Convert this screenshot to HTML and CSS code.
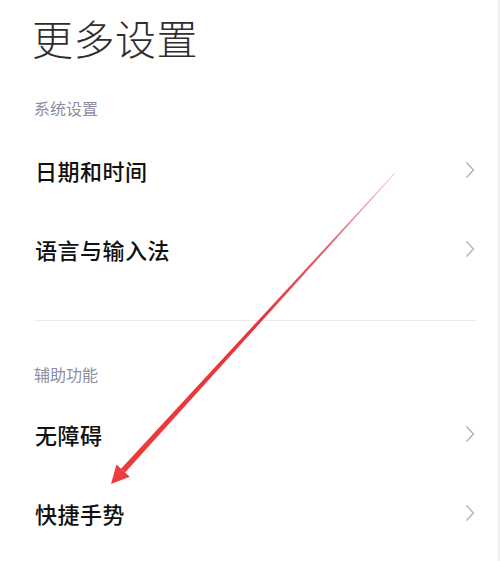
FILE: index.html
```html
<!DOCTYPE html>
<html lang="zh-CN">
<head>
<meta charset="utf-8">
<title>更多设置</title>
<link rel="stylesheet" href="styles.css">
</head>
<body>
<div class="page">
  <h1 class="title">更多设置</h1>
  <div class="section-label first">系统设置</div>
  <div class="row"><span class="row-text">日期和时间</span><svg class="chev" viewBox="0 0 10 18" width="10" height="18"><path d="M1.5 1.5 L8.5 9 L1.5 16.5"/></svg></div>
  <div class="row"><span class="row-text">语言与输入法</span><svg class="chev" viewBox="0 0 10 18" width="10" height="18"><path d="M1.5 1.5 L8.5 9 L1.5 16.5"/></svg></div>
  <div class="divider"></div>
  <div class="section-label second">辅助功能</div>
  <div class="row"><span class="row-text">无障碍</span><svg class="chev" viewBox="0 0 10 18" width="10" height="18"><path d="M1.5 1.5 L8.5 9 L1.5 16.5"/></svg></div>
  <div class="row"><span class="row-text">快捷手势</span><svg class="chev" viewBox="0 0 10 18" width="10" height="18"><path d="M1.5 1.5 L8.5 9 L1.5 16.5"/></svg></div>
</div>
<svg class="arrow" viewBox="0 0 500 561" width="500" height="561">
  <defs>
    <linearGradient id="g" gradientUnits="userSpaceOnUse" x1="395" y1="173" x2="123" y2="471">
      <stop offset="0" stop-color="#f0c8cf"/>
      <stop offset="0.25" stop-color="#e0606c"/>
      <stop offset="0.5" stop-color="#e5353c"/>
      <stop offset="1" stop-color="#ee3a3a"/>
    </linearGradient>
  </defs>
  <polygon fill="url(#g)" points="395.3,173.2 394.7,172.8 121.0,468.8 125.1,472.6"/>
  <polygon fill="#ee3b3b" points="111,484 116.5,464.6 129.7,476.8"/>
</svg>
</body>
</html>
```
FILE: styles.css
```css
html, body {
  margin: 0;
  padding: 0;
  background: #ffffff;
}
body {
  width: 500px;
  height: 561px;
  overflow: hidden;
  position: relative;
  font-family: "Noto Sans CJK SC", "Noto Sans", sans-serif;
}
.page {
  padding: 9px 23px 0 34px;
  box-shadow: inset -2px 0 0 #f1f1f1;
  height: 561px;
  box-sizing: border-box;
}
.title {
  margin: 0 0 0 -2px;
  font-size: 41px;
  line-height: 57px;
  font-weight: 300;
  color: #2e2e2e;
  letter-spacing: 0.5px;
}
.section-label {
  font-size: 16px;
  line-height: 20px;
  color: #8d8ca3;
}
.section-label.first {
  margin-top: 32px;
  margin-bottom: 12px;
}
.section-label.second {
  margin-top: 43px;
  margin-bottom: 10.5px;
}
.row {
  height: 79px;
  display: flex;
  align-items: center;
  justify-content: space-between;
}
.row-text {
  font-size: 22px;
  font-weight: 500;
  color: #111111;
  letter-spacing: 0.5px;
  margin-left: 1px;
}
.chev {
  margin-right: 2px;
  fill: none;
  stroke: #b3b3b3;
  stroke-width: 1.4;
}
.divider {
  height: 1px;
  background: #ececec;
  margin-top: 31.5px;
}
.arrow {
  position: absolute;
  left: 0;
  top: 0;
  pointer-events: none;
}
```
